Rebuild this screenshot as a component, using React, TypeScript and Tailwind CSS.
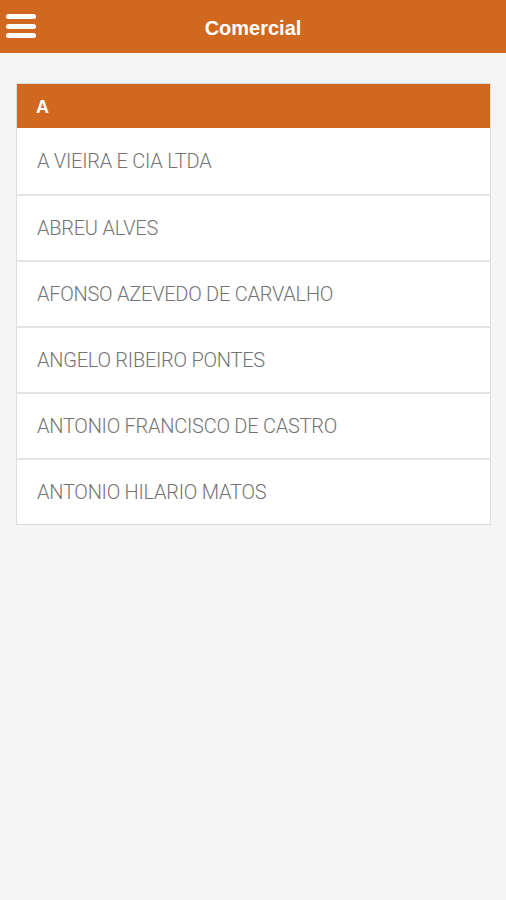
import React from "react";

const names = [
  "A VIEIRA E CIA LTDA",
  "ABREU ALVES",
  "AFONSO AZEVEDO DE CARVALHO",
  "ANGELO RIBEIRO PONTES",
  "ANTONIO FRANCISCO DE CASTRO",
  "ANTONIO HILARIO MATOS",
];

export default function App() {
  return (
    <div className="min-h-[900px] w-[506px] bg-[#f5f5f5] font-['Liberation_Sans',Arial,sans-serif]">
      {/* top bar */}
      <div className="relative flex h-[53px] items-center justify-center bg-[#d1681f] pt-[3px]">
        <button className="absolute left-[6px] top-[14px] flex w-[30px] flex-col gap-[4.5px]">
          <span className="block h-[5px] w-full rounded-full bg-white" />
          <span className="block h-[5px] w-full rounded-full bg-white" />
          <span className="block h-[5px] w-full rounded-full bg-white" />
        </button>
        <h1 className="text-[20px] font-bold text-white">Comercial</h1>
      </div>

      <div className="pl-[16px] pr-[15px] pt-[30px]">
        <div className="border border-[#dcdcdc] bg-white">
          <div className="flex h-[44px] items-center bg-[#d1681f] px-[19px] pt-[2px] text-[18px] font-bold text-white">
            A
          </div>
          {names.map((n, i) => (
            <div
              key={n}
              className={
                "flex h-[66px] items-center px-[20px] font-['Roboto',sans-serif] text-[20px] font-light tracking-[-0.25px] text-[#737373] " +
                (i > 0 ? "border-t-2 border-[#e3e3e3]" : "")
              }
            >
              {n}
            </div>
          ))}
        </div>
      </div>
    </div>
  );
}
